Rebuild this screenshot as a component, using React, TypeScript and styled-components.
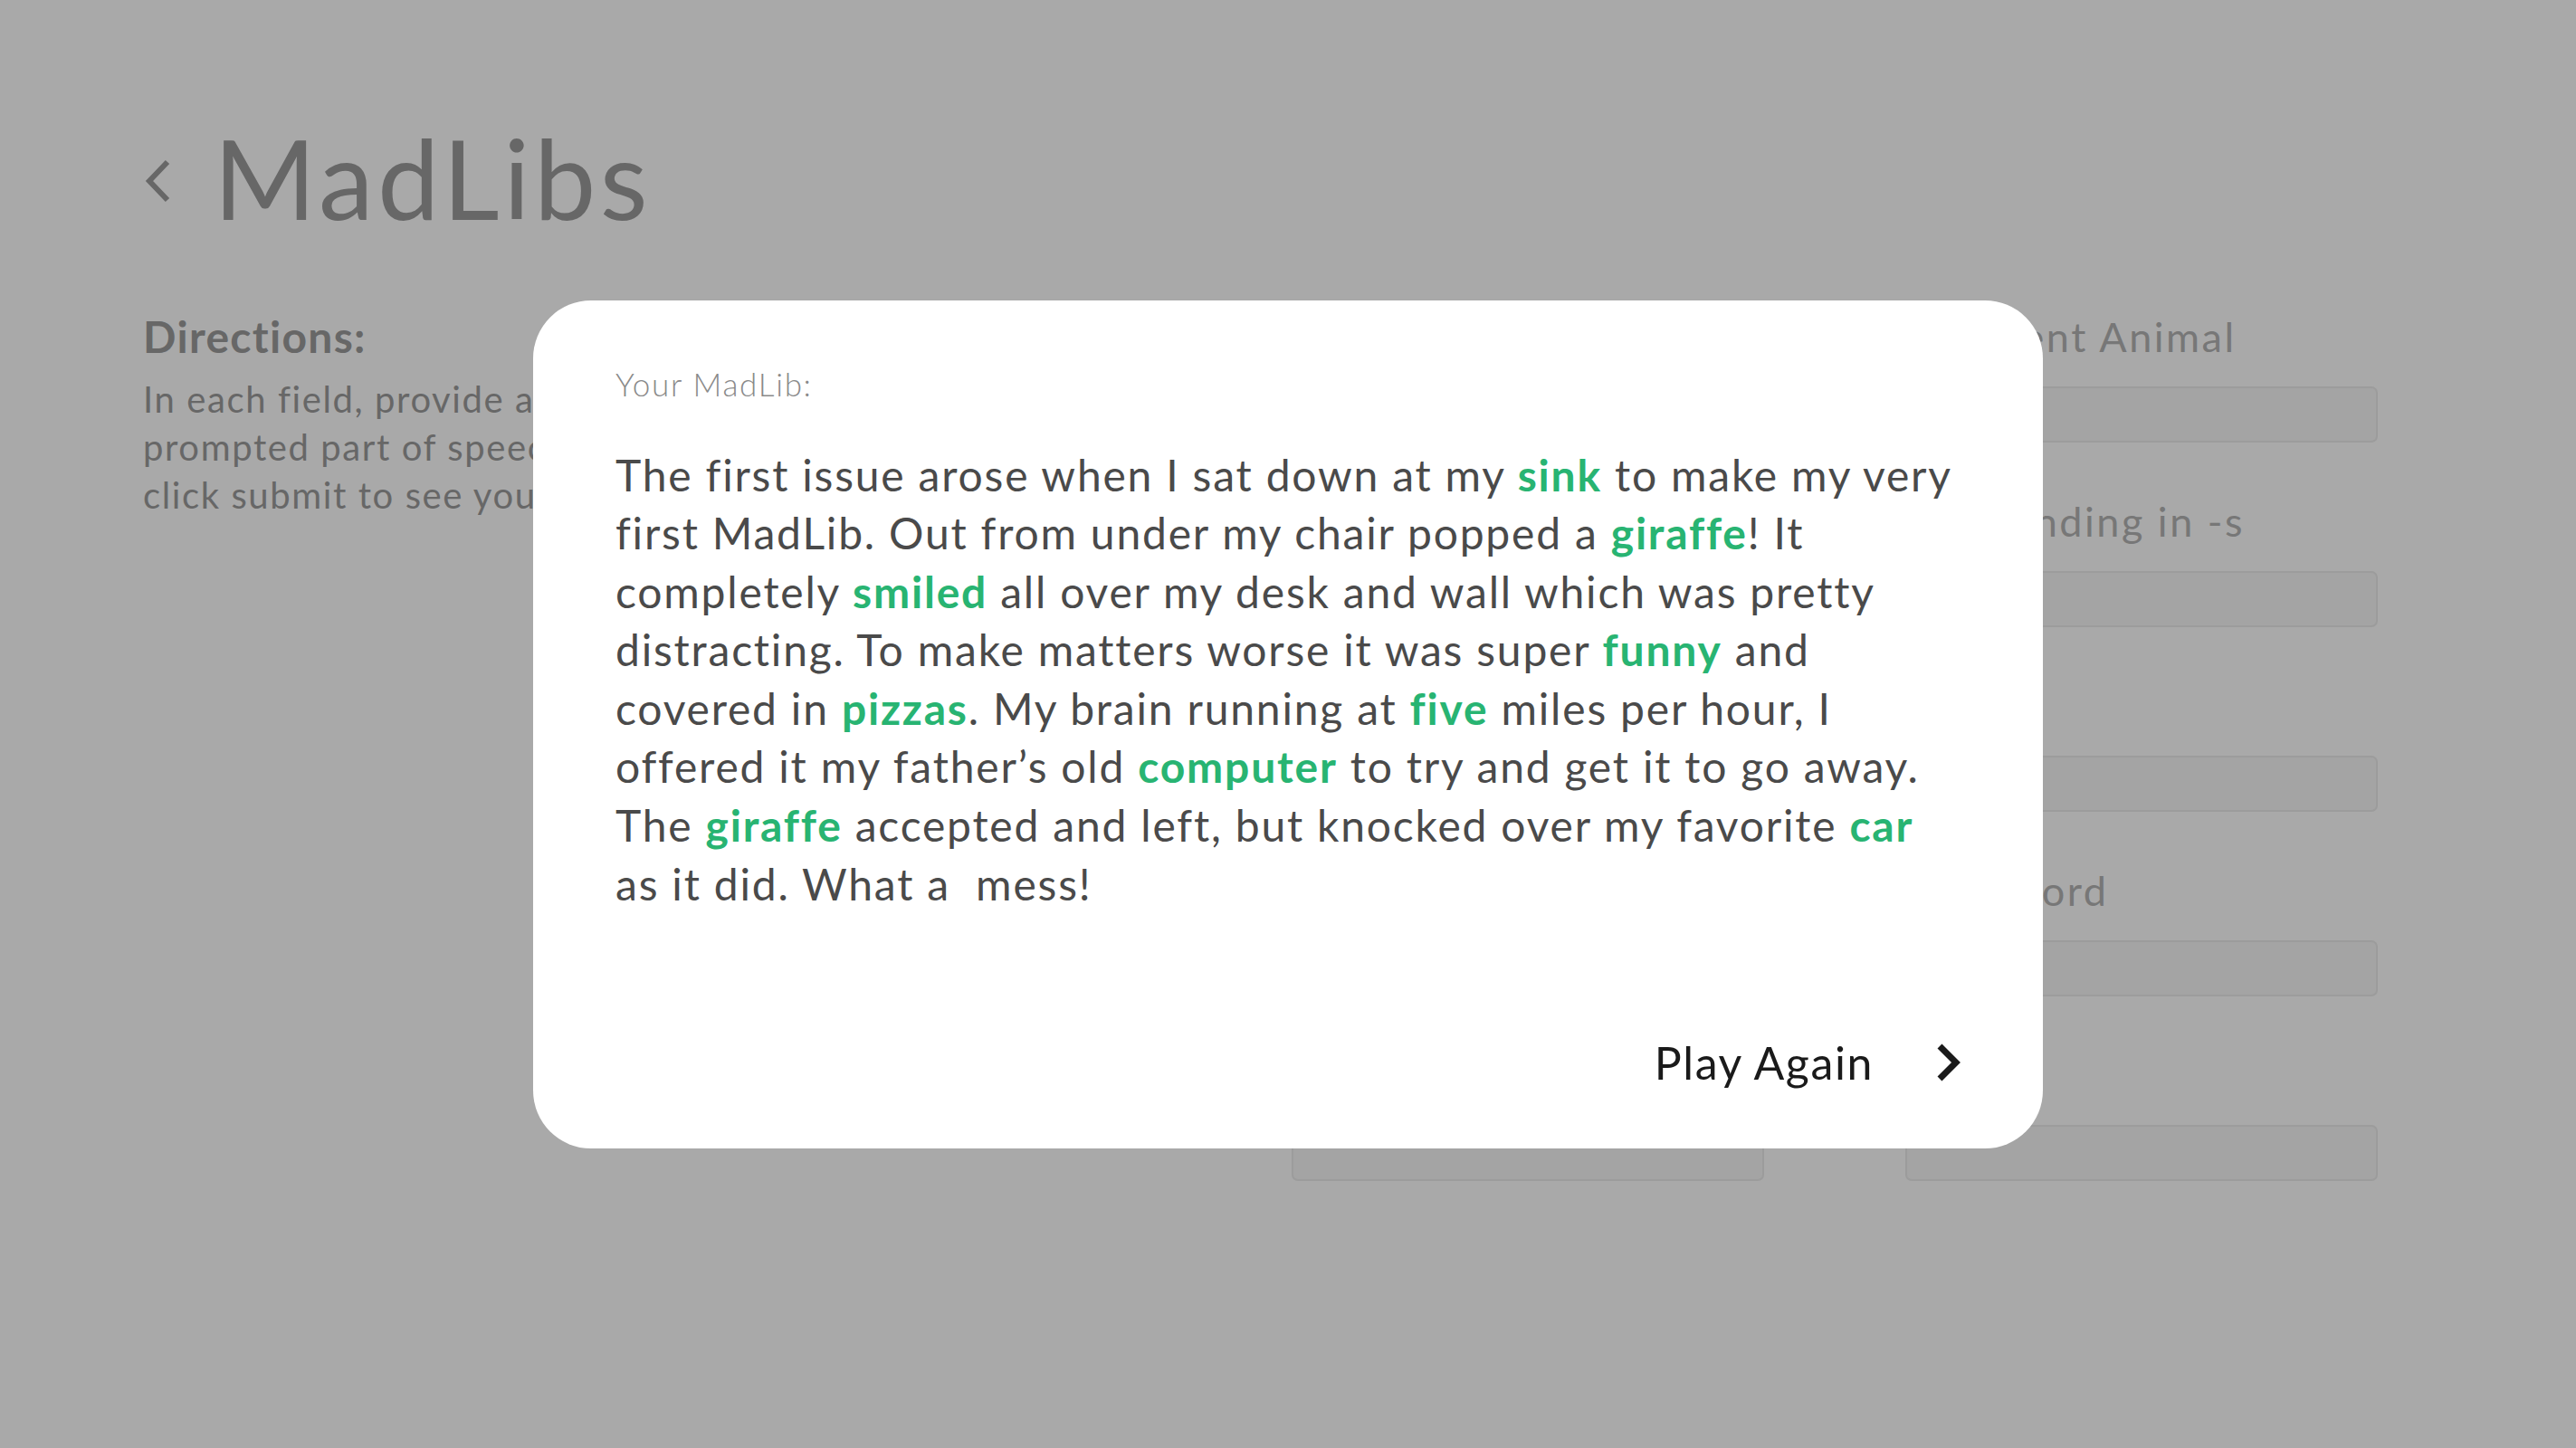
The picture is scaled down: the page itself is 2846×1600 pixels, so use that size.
import React from "react";
import styled, { createGlobalStyle } from "styled-components";

const GlobalStyle = createGlobalStyle`
  html, body {
    margin: 0;
    padding: 0;
    background: #a9a9a9;
  }
  body {
    font-family: Lato, "Open Sans", sans-serif;
  }
`;

const Page = styled.div`
  min-height: 1600px;
  padding-top: 135px;
  box-sizing: border-box;
`;

const Header = styled.header`
  display: flex;
  align-items: center;
  gap: 46px;
  padding-left: 158px;
`;

const BackIcon = styled.svg`
  width: 32px;
  height: 50px;
  flex: none;
  margin-top: 8px;
`;

const Title = styled.h1`
  margin: 0;
  font-size: 122px;
  line-height: 1;
  font-weight: 400;
  color: #676767;
  letter-spacing: 4.5px;
`;

const Main = styled.main`
  display: grid;
  grid-template-columns: 760px 1fr;
  column-gap: 509px;
  padding-left: 158px;
  margin-top: 91px;
`;

const Directions = styled.section`
  display: flex;
  flex-direction: column;
  gap: 19px;
`;

const DirectionsTitle = styled.h2`
  margin: 0;
  font-size: 48px;
  line-height: 1;
  font-weight: 700;
  color: #676767;
  letter-spacing: 1.3px;
`;

const DirectionsText = styled.p`
  margin: 0;
  font-size: 40px;
  line-height: 53px;
  color: #676767;
  letter-spacing: 1.6px;
`;

const Form = styled.form`
  display: grid;
  grid-template-columns: 522px 522px;
  column-gap: 156px;
  row-gap: 65px;
  margin-top: 2px;
`;

const Field = styled.label`
  display: flex;
  flex-direction: column;
  gap: 32px;
`;

const FieldLabel = styled.span`
  font-size: 45px;
  line-height: 1;
  color: #777777;
  letter-spacing: 2.5px;
`;

const Input = styled.input`
  height: 62px;
  box-sizing: border-box;
  border: 2px solid #9c9c9c;
  border-radius: 7px;
  background: #a4a4a4;
  font: inherit;
`;

const Overlay = styled.div`
  position: fixed;
  inset: 0;
  display: flex;
  align-items: center;
  justify-content: center;
`;

const Modal = styled.div`
  width: 1668px;
  height: 937px;
  box-sizing: border-box;
  background: #ffffff;
  border-radius: 64px;
  padding: 75px 91px 70px 91px;
  display: flex;
  flex-direction: column;
`;

const ModalLabel = styled.div`
  font-size: 35px;
  line-height: 1;
  font-weight: 300;
  color: #8a8a8a;
  letter-spacing: 1.7px;
`;

const Story = styled.p`
  margin: 51px 0 0 0;
  font-size: 48px;
  line-height: 64.6px;
  color: #4a4a4a;
  letter-spacing: 1.8px;
`;

const Blank = styled.span`
  color: #28b472;
  font-weight: 700;
`;

const Footer = styled.div`
  margin-top: auto;
  display: flex;
  justify-content: flex-end;
`;

const PlayAgain = styled.button`
  display: flex;
  align-items: center;
  gap: 70px;
  border: none;
  background: none;
  padding: 0;
  font-family: inherit;
  font-size: 50px;
  line-height: 1;
  color: #1a1a1a;
  letter-spacing: 1.6px;
  cursor: pointer;
`;

const NextIcon = styled.svg`
  width: 26px;
  height: 42px;
  flex: none;
`;

const fields = [
  "Noun",
  "Different Animal",
  "Verb (past tense)",
  "Verb ending in -s",
  "Adjective",
  "Noun",
  "Plural Noun",
  "Silly Word",
  "Number",
  "Noun",
];

export default function App() {
  return (
    <>
      <GlobalStyle />
      <Page>
        <Header>
          <BackIcon viewBox="0 0 32 50">
            <polyline
              points="27,4 7,25 27,46"
              fill="none"
              stroke="#676767"
              strokeWidth="6"
            />
          </BackIcon>
          <Title>MadLibs</Title>
        </Header>
        <Main>
          <Directions>
            <DirectionsTitle>Directions:</DirectionsTitle>
            <DirectionsText>
              In each field, provide a word for the
              <br />
              prompted part of speech. Then
              <br />
              click submit to see your MadLib!
            </DirectionsText>
          </Directions>
          <Form>
            {fields.map((f, i) => (
              <Field key={i}>
                <FieldLabel>{f}</FieldLabel>
                <Input type="text" />
              </Field>
            ))}
          </Form>
        </Main>
      </Page>
      <Overlay>
        <Modal>
          <ModalLabel>Your MadLib:</ModalLabel>
          <Story>
            The first issue arose when I sat down at my <Blank>sink</Blank> to make
            my very first MadLib. Out from under my chair popped a{" "}
            <Blank>giraffe</Blank>! It completely <Blank>smiled</Blank> all over my
            desk and wall which was pretty distracting. To make matters worse it
            was super <Blank>funny</Blank> and covered in <Blank>pizzas</Blank>. My
            brain running at <Blank>five</Blank> miles per hour, I offered it my
            father’s old <Blank>computer</Blank> to try and get it to go away. The{" "}
            <Blank>giraffe</Blank> accepted and left, but knocked over my favorite{" "}
            <Blank>car</Blank> as it did. What a{"\u00a0"} mess!
          </Story>
          <Footer>
            <PlayAgain type="button">
              Play Again
              <NextIcon viewBox="0 0 26 42">
                <polyline
                  points="3,3 21,21 3,39"
                  fill="none"
                  stroke="#1a1a1a"
                  strokeWidth="7"
                />
              </NextIcon>
            </PlayAgain>
          </Footer>
        </Modal>
      </Overlay>
    </>
  );
}
